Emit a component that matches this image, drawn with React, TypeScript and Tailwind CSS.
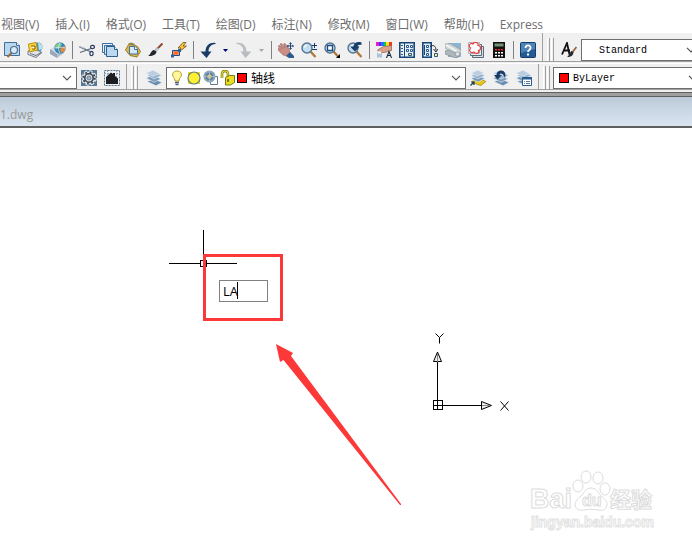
import type { ReactNode } from 'react';

const menus = [
  '视图(V)',
  '插入(I)',
  '格式(O)',
  '工具(T)',
  '绘图(D)',
  '标注(N)',
  '修改(M)',
  '窗口(W)',
  '帮助(H)',
  'Express',
];

function Icon({ children }: { children: ReactNode }) {
  return (
    <svg width="16" height="16" viewBox="0 0 16 16" fill="none" aria-hidden="true" className="shrink-0">
      {children}
    </svg>
  );
}

function Magnifier() {
  return (
    <>
      <path d="M9.5 9.5l5 5.500" stroke="#b07a3a" strokeWidth="2.400" />
      <circle cx="6" cy="6" r="5" fill="#c3dcf0" stroke="#54748f" strokeWidth="1.400" />
      <path d="M3.400 5.600c.3-1.200 1.200-2 2.400-2.200" stroke="#fff" strokeWidth="1.200" />
    </>
  );
}

function LayerStack() {
  return (
    <>
      <path d="M1 11.500l7.500-2.500 7.500 3.500-6 3.300z" fill="#6a8cb0" stroke="#e8eef5" strokeWidth=".6" />
      <path d="M0 8l7.500-3 7.500 4-7 3.300z" fill="#7d9cbc" stroke="#e8eef5" strokeWidth=".6" />
      <path d="M1 5l7.500-3 7 3.500-7.500 3.500z" fill="#98b2cc" stroke="#e8eef5" strokeWidth=".6" />
      <path d="M0 3l7-2.800 6.500 3.300-6.500 2.800z" fill="#bacde0" stroke="#e8eef5" strokeWidth=".6" />
    </>
  );
}

const icons: Record<string, ReactNode> = {
  preview: (
    <>
      <path d="M.5.5h12l3 3v10h-15z" fill="#b9d6ef" stroke="#3f6f9f" />
      <path d="M12.500.5v3h3" fill="#fff" stroke="#3f6f9f" />
      <path d="M8 10.500l-4.500 4.500" stroke="#9a6a35" strokeWidth="2" />
      <circle cx="10" cy="8" r="3.500" fill="#d7eafa" stroke="#4f6f8c" strokeWidth="1.200" />
    </>
  ),
  plot: (
    <>
      <circle cx="11" cy="5" r="4.500" fill="#3e93c9" />
      <path d="M11 .5c3 1 5 3 4.500 6l-3.500 2z" fill="#bfe0ee" />
      <path d="M1 9l7-2 7 3.500-6 5-8-3z" fill="#dfe4ea" stroke="#566372" strokeWidth=".8" />
      <path d="M1.500 2l7.500-1.500 1.500 7.500-8 2z" fill="#ffd53d" stroke="#b8900c" />
      <path d="M4 4h4v3h-3" fill="#fff6c8" stroke="#7a5c00" />
      <path d="M3 11.500l6 2 5-3" stroke="#4b5865" strokeWidth=".8" />
    </>
  ),
  publish: (
    <>
      <path d="M0 7l7-3 8 5-7 5.500z" fill="#d3dae3" />
      <path d="M0 7l7 5v4l-7-4z" fill="#97a6b8" />
      <path d="M7 12l7-4v3l-7 5z" fill="#b3bfcc" />
      <circle cx="10" cy="6" r="5.700" fill="#3684bf" />
      <path d="M5 4c2-4 6-3.500 7-2l-2 4-4 1z" fill="#7fc98b" />
      <path d="M10 7l4.500-3.500c1.500 2 1 4.500-.5 6.500l-3 .5z" fill="#e08b3c" />
      <path d="M4.500 6c3-1 7-1 11 0M10 .5c-2 4-2 7 0 11" stroke="#dcecf7" strokeWidth=".7" />
    </>
  ),
  cut: (
    <>
      <path d="M0 4.500l11 5M1 10.500l11-4" stroke="#5b6a7b" strokeWidth="1.300" />
      <path d="M0 4.500l7 2.300" stroke="#a8b4c0" />
      <ellipse cx="13.500" cy="5" rx="2" ry="1.600" stroke="#2d3e66" strokeWidth="1.200" />
      <ellipse cx="12.500" cy="11.500" rx="1.600" ry="2.200" stroke="#2d3e66" strokeWidth="1.200" />
    </>
  ),
  copy: (
    <>
      <path d="M.5 1.500h10v9h-10z" fill="#eaf3fb" stroke="#3d6f9f" />
      <path d="M2.500 3.500h10v9h-10z" fill="#d4e6f5" stroke="#3d6f9f" />
      <path d="M4.500 4.500h8l3 3v7h-11z" fill="#bcd8ef" stroke="#2f618f" />
      <path d="M12.500 4.500v3h3" fill="#fff" stroke="#2f618f" />
    </>
  ),
  paste: (
    <>
      <path d="M4.500 1l8 3.500 3 5-3.500 5.500-7-1.500-4.500-5.500z" fill="#d9b648" stroke="#9a7c2a" />
      <path d="M4.500 4.500h5.500l2.500 2.500v5h-8z" fill="#d6e8f7" stroke="#44719a" />
      <path d="M9.500 4.500v3h3" fill="#fff" stroke="#44719a" />
      <path d="M4 3l2-2.500 4 1.500-1 1.500z" fill="#8d8250" />
    </>
  ),
  brush: (
    <>
      <path d="M14.500 1.500l-5 5" stroke="#8a4a2d" strokeWidth="2" />
      <path d="M10 6l-2.500 2.500" stroke="#b6bfc8" strokeWidth="3" />
      <path d="M8.500 9.500c0 3-4 5-8.500 4.500 2.500-1 3-5.500 6-6z" fill="#22262c" />
    </>
  ),
  blockEdit: (
    <>
      <path d="M12 .5l-5 5.500h3l-2 4 7.500-6h-3.500l3-3.500z" fill="#ffc52e" stroke="#6d5220" strokeWidth=".8" />
      <path d="M1.500 8.500h7v5h-7z" fill="#f39a66" stroke="#1f4f86" />
      <path d="M0 12.500h3v3h-3zM7 7h3v3h-3z" fill="#2d62a0" />
      <path d="M3 9.500h4v3h-4z" fill="#ff6a2c" />
    </>
  ),
  undo: (
    <path d="M15.500 1c-5-1-10 2-10 8.500h-5l6 6.500 5-6.500h-3c0-4 2-7 7-7.500z" fill="#193b68" />
  ),
  redo: <path d="M.5 1c5-1 10 2 10 8.500h5l-6 6.500-5-6.500h3c0-4-2-7-7-7.500z" fill="#b9bcc0" />,
  pan: (
    <>
      <path d="M0 4l1.500-.5 3 3-2.500-4.500 1.500-.5 3.500 4.500-1.500-4 1.500-.5 4 5.500 1 4-3 3-4-1-4-4-1.500-2 1.500-.5 1.500 1z" fill="#c98f87" stroke="#9a625d" strokeWidth=".6" />
      <path d="M8 14l4-4 4 4v2h-5z" fill="#2c5b8f" />
      <path d="M12.500 1v6M9.500 4h6" stroke="#294a78" />
      <path d="M11 2l1.500-2 1.500 2zM11 6l1.500 2 1.500-2zM10.500 2.500l-2 1.500 2 1.500zM14.500 2.500l1.500 1.500-1.500 1.500z" fill="#294a78" />
    </>
  ),
  zoomRealtime: (
    <>
      <Magnifier />
      <path d="M13.500 1v5M11 3.500h5M11 7.500h5" stroke="#183d6c" />
    </>
  ),
  zoomWindow: (
    <>
      <Magnifier />
      <path d="M3.500 3.500h5v5h-5z" fill="#fff" stroke="#1c4a7c" strokeWidth="1.300" />
      <path d="M16 12v4h-4z" fill="#000" />
    </>
  ),
  zoomPrevious: (
    <>
      <Magnifier />
      <path d="M14.500.5c-5-1.500-7.500 1-8 4h-3.500l5 5 4.500-5h-2.500c0-1 2-2 4.500-1.500z" fill="#173d68" />
    </>
  ),
  properties: (
    <>
      <path d="M0 0h3v4h-3z" fill="#e11dd2" />
      <path d="M3 0h2v4h-2z" fill="#6a21e8" />
      <path d="M5 0h3v4h-3z" fill="#1477ff" />
      <path d="M8 0h2v4h-2z" fill="#14c44a" />
      <path d="M10 0h3v4h-3z" fill="#f5e71c" />
      <path d="M13 0h3v4h-3z" fill="#f3342b" />
      <path d="M1.500 8l6-3.500 8-1v5l-4 1-3 1-5 0z" fill="#dba18c" stroke="#8a5a4b" strokeWidth=".7" />
      <path d="M1 10.500h5v5h-5z" fill="#a9c4db" />
      <path d="M2 9.500h3v2h-3z" fill="#fff" />
      <path d="M10.500 16l2.500-6.500 2.500 6.500M11.500 13.500h3" stroke="#1b2b3d" strokeWidth="1.100" />
    </>
  ),
  designCenter: (
    <>
      <path d="M.8.8h14.400v14.400h-14.400z" fill="#e6f1fa" stroke="#174679" strokeWidth="1.600" />
      <path d="M5.500 1v14" stroke="#174679" />
      <path d="M2 3.500h2M2 6.500h2M2 9.500h2M2 12.500h2" stroke="#355f8b" />
      <path d="M7.500 3.500h2v2h-2zM11.500 3.500h2v2h-2zM7.500 7.500h2v2h-2zM11.500 7.500h2v2h-2z" fill="#fff" stroke="#26578a" />
      <path d="M9.500 11.500h3v2h-3z" fill="#ffef62" stroke="#26578a" />
    </>
  ),
  toolPalettes: (
    <>
      <path d="M.8.8h8.400v14.400h-8.400z" fill="#dcecf8" stroke="#174679" strokeWidth="1.600" />
      <path d="M2.500 3v10" stroke="#174679" />
      <path d="M4.500 3.500h2v2h-2zM4.500 7.500h2v2h-2zM4.500 11.500h2v2h-2z" fill="#fff" stroke="#26578a" />
      <path d="M8 4.500c3-2 6-1 6 4M11.500 7l2.500 3 2-3" stroke="#202b38" />
      <path d="M12.500 11.500h3v3h-3z" fill="#ffef62" stroke="#26578a" />
    </>
  ),
  sheetSet: (
    <>
      <path d="M3 1h13v14h-13z" fill="#8fb2cf" />
      <path d="M0 2l5-.5 11 6.500v4l-5 1-11-7z" fill="#cfd6d6" stroke="#8a979d" strokeWidth=".6" />
      <path d="M1 3l13 7.500" stroke="#f4f6f6" strokeWidth="1.500" />
      <path d="M0 9l4-1 10 5-1 2.500h-4l-9-3.500z" fill="#aeb8ba" stroke="#75858e" strokeWidth=".6" />
      <ellipse cx="12.500" cy="12" rx="2.500" ry="2.200" fill="#dfe4e4" stroke="#75858e" strokeWidth=".7" />
    </>
  ),
  markup: (
    <>
      <path d="M4.500 4.500h11v11h-11z" fill="#d7dee5" stroke="#5a6a7a" />
      <path d="M2.500 2.500h11v11h-11z" fill="#e6ebf0" stroke="#5a6a7a" />
      <path d="M.5.5h11v11h-11z" fill="#f5f7f9" stroke="#a9b5c0" />
      <path d="M2.500 6c-3-2 0-6 2.500-4 2-3 6-1 5 1.500 3.500 0 3 5 .5 5 1 3-3 4-4.500 1.500-3 2-5.500-1-3.500-4z" fill="#fff" stroke="#ef3b3b" strokeWidth="1.200" />
    </>
  ),
  calculator: (
    <>
      <path d="M2 0h12v16h-12z" fill="#111" />
      <path d="M3.500 1.500h9v3h-9z" fill="#739273" />
      <path d="M4 7h2v1.500h-2zM7 7h2v1.500h-2zM10 7h2v1.500h-2z" fill="#ef2b2b" />
      <path d="M4 10h2v1.500h-2zM7 10h2v1.500h-2zM10 10h2v1.500h-2zM4 13h2v1.500h-2zM7 13h2v1.500h-2zM10 13h2v1.500h-2z" fill="#fff" />
    </>
  ),
  help: (
    <>
      <rect x=".5" y=".5" width="15" height="15" rx="1" fill="#225b95" stroke="#153e69" />
      <path d="M1 1h14v6l-14 4z" fill="#4d83b7" />
      <path d="M5.500 6c0-3.500 5.500-3.500 5 0 0 2-2.500 2-2.500 4" stroke="#fff" strokeWidth="1.800" />
      <path d="M7 11.500h2v2h-2z" fill="#fff" />
    </>
  ),
  textStyle: (
    <>
      <path d="M1 12.500l5-11.500 2.500 11.500M3 8.500h6" stroke="#111" strokeWidth="1.800" />
      <path d="M15.500 5l-4 5" stroke="#9b6237" strokeWidth="1.800" />
      <path d="M12.500 10c0 3-2 5-6.500 5 2-1 2-4 4.500-6z" fill="#252a30" />
    </>
  ),
  workspaceSettings: (
    <>
      <path d="M0 0h16v16h-16z" fill="#557796" />
      <circle cx="8" cy="8" r="6.600" fill="#dce5ed" stroke="#dce5ed" strokeWidth="2.400" strokeDasharray="3.200 1.980" />
      <circle cx="8" cy="8" r="5.800" stroke="#3a4148" strokeWidth="1.800" strokeDasharray="1.800 2.755" />
      <circle cx="8" cy="8" r="4.200" stroke="#3a4148" strokeWidth="1.600" />
      <circle cx="8" cy="8" r="2" fill="#9fb4c6" stroke="#5b7186" strokeWidth=".8" />
    </>
  ),
  myWorkspace: (
    <>
      <path d="M.5.5h15v15h-15z" stroke="#56738e" strokeDasharray="2 1" />
      <path d="M0 3.500h16M12.500 0v16M3.500 0v16" stroke="#8da4b8" strokeDasharray="2 1" />
      <path d="M2 7l5-4.500 2 1.500v-1h2v3l3 2.500v5.500h-12z" fill="#1c1e21" />
    </>
  ),
  layers: <LayerStack />,
  makeLayerCurrent: (
    <>
      <path d="M2 11.500l7-3 7 3-5 4-4-1z" fill="#e5c51d" stroke="#927b0b" strokeWidth=".6" />
      <path d="M1 8.500l7-3 7 3-7 3.500z" fill="#7897b8" stroke="#e8eef5" strokeWidth=".6" />
      <path d="M1 5.500l7-3 7 3-7 3.500z" fill="#98b2cc" stroke="#e8eef5" strokeWidth=".6" />
      <path d="M1 3l7-2.800 6 2.800-7 3z" fill="#bacde0" stroke="#e8eef5" strokeWidth=".6" />
      <path d="M.5 15.500l3-3M1 12h3v3" stroke="#16375f" strokeWidth="1.200" />
    </>
  ),
  layerPrevious: (
    <>
      <LayerStack />
      <path d="M12 8c1.500-5-1-8-4.500-7.500-3 .5-4 2.500-4 4.500h-2.500l3.500 4.500 4.500-4.500h-2.500c0-2 3.500-3 5.500 3z" fill="#183c68" />
    </>
  ),
  layerStates: (
    <>
      <LayerStack />
      <path d="M6.500 7.500h9v8h-9z" fill="#fff" stroke="#285d91" />
      <path d="M6 7h10v2.500h-10z" fill="#285d91" />
      <path d="M8 11.500h1M10 11.500h4M8 13.500h1M10 13.500h4" stroke="#5a7896" />
    </>
  ),
  bulb: (
    <>
      <path d="M8 1c-5 0-5.500 5-2.500 7.500l.5 2.500h4l.5-2.500c3-2.500 2.500-7.500-2.500-7.500z" fill="#fff799" stroke="#b0a12a" />
      <path d="M6 12.500h4M6.500 14.500h3" stroke="#55616d" strokeWidth="1.300" />
    </>
  ),
  sun: (
    <>
      <path d="M2 2h3v3h-3zM11 2h3v3h-3zM2 11h3v3h-3zM11 11h3v3h-3z" fill="#edda24" />
      <circle cx="8" cy="8" r="6" fill="#ffef32" stroke="#5d7f86" strokeWidth="1.200" />
    </>
  ),
  viewportFreeze: (
    <>
      <path d="M7.500 6.500h7v8h-7z" fill="#fff" stroke="#5e7e9c" />
      <circle cx="6.500" cy="6.500" r="6" fill="#86a3b9" />
      <circle cx="6.500" cy="6.500" r="3" fill="#d5c675" stroke="#58799a" strokeWidth="1.300" />
      <path d="M6.500 1v11M1 6.500h11" stroke="#b7c9d7" strokeWidth=".7" />
    </>
  ),
  unlock: (
    <>
      <path d="M2 8v-4c0-4 6-4 6 0v3" stroke="#7d780b" strokeWidth="2.600" />
      <path d="M2 8v-4c0-4 6-4 6 0v3" stroke="#e2db3a" strokeWidth="1.200" />
      <path d="M5.500 7.500l4-2h5v7l-4 2.500h-5z" fill="#e8de25" stroke="#7d780b" />
      <path d="M8 9v3" stroke="#595600" strokeWidth="1.500" />
    </>
  ),
};

function ToolButton({ name, label }: { name: string; label: string }) {
  return (
    <button type="button" aria-label={label} title={label} className="flex h-[22px] w-[23px] shrink-0 items-center justify-center">
      <Icon>{icons[name]}</Icon>
    </button>
  );
}

function CaretButton({ label, className }: { label: string; className: string }) {
  return (
    <button type="button" aria-label={label} className={`flex h-[22px] w-[13px] shrink-0 items-center justify-center ${className}`}>
      <svg width="5" height="3" viewBox="0 0 5 3" fill="currentColor" aria-hidden="true">
        <path d="M0 0h5L2.500 3z" />
      </svg>
    </button>
  );
}

function Separator() {
  return (
    <div className="flex h-[18px] w-[6px] shrink-0 justify-center">
      <div className="w-px bg-[#808080]" />
    </div>
  );
}

function Grip() {
  return (
    <div className="flex h-6 shrink-0 gap-px" aria-hidden="true">
      <div className="w-[3px] border-r border-l border-r-[#a0a0a0] border-l-white" />
      <div className="w-[3px] border-r border-l border-r-[#a0a0a0] border-l-white" />
    </div>
  );
}

function Chevron() {
  return (
    <svg width="10" height="6" viewBox="0 0 10 6" fill="none" stroke="#555" aria-hidden="true" className="shrink-0">
      <path d="M1 .8l4 4 4-4" strokeWidth="1.200" />
    </svg>
  );
}

type ComboProps = {
  label: string;
  value: string;
  className: string;
  selectClassName?: string;
  children?: ReactNode;
};

function Combo({ label, value, className, selectClassName = '', children }: ComboProps) {
  return (
    <div className={`flex h-[22px] shrink-0 items-center border border-[#6e6e6e] bg-white pr-1 text-black ${className}`}>
      {children}
      <select aria-label={label} className={`h-5 min-w-0 flex-1 appearance-none bg-transparent outline-none ${selectClassName}`}>
        <option>{value}</option>
      </select>
      <Chevron />
    </div>
  );
}

function Swatch() {
  return <span className="h-[10px] w-[10px] shrink-0 border border-black bg-[#ff0000]" />;
}

function StandardBar() {
  return (
    <div className="flex h-[29px] items-center overflow-hidden border-b border-[#a0a0a0]">
      <div className="flex h-full shrink-0 items-center border-r border-[#a0a0a0] pt-[6px] pr-[3px]">
        <ToolButton name="preview" label="打印预览" />
        <ToolButton name="plot" label="打印" />
        <ToolButton name="publish" label="发布" />
        <Separator />
        <ToolButton name="cut" label="剪切" />
        <ToolButton name="copy" label="复制" />
        <ToolButton name="paste" label="粘贴" />
        <ToolButton name="brush" label="特性匹配" />
        <ToolButton name="blockEdit" label="块编辑器" />
        <Separator />
        <ToolButton name="undo" label="放弃" />
        <CaretButton label="放弃列表" className="text-[#00007f]" />
        <ToolButton name="redo" label="重做" />
        <CaretButton label="重做列表" className="text-[#a8a8b0]" />
        <Separator />
        <ToolButton name="pan" label="实时平移" />
        <ToolButton name="zoomRealtime" label="实时缩放" />
        <ToolButton name="zoomWindow" label="窗口缩放" />
        <ToolButton name="zoomPrevious" label="缩放上一个" />
        <Separator />
        <ToolButton name="properties" label="特性" />
        <ToolButton name="designCenter" label="设计中心" />
        <ToolButton name="toolPalettes" label="工具选项板" />
        <ToolButton name="sheetSet" label="图纸集管理器" />
        <ToolButton name="markup" label="标记集管理器" />
        <ToolButton name="calculator" label="快速计算器" />
        <Separator />
        <ToolButton name="help" label="帮助" />
      </div>
      <div className="flex h-full shrink-0 items-center pt-[6px] pl-1">
        <Grip />
        <div className="pr-px pl-[3px]">
          <ToolButton name="textStyle" label="文字样式" />
        </div>
        <Combo
          label="文字样式控制"
          value="Standard"
          className="w-[120px]"
          selectClassName="pl-[17px] font-['Liberation_Mono',monospace] text-[10px]"
        />
      </div>
    </div>
  );
}

function LayerBar() {
  return (
    <div className="flex h-[27px] items-center overflow-hidden border-t border-b border-t-white border-b-[#a0a0a0]">
      <div className="flex h-full shrink-0 items-center border-r border-[#a0a0a0] pt-[3px] pr-[3px]">
        <Combo label="工作空间" value="" className="w-[77px] border-l-0" />
        <ToolButton name="workspaceSettings" label="工作空间设置" />
        <ToolButton name="myWorkspace" label="我的工作空间" />
      </div>
      <div className="flex h-full shrink-0 items-center border-r border-[#a0a0a0] pt-[3px] pr-[3px] pl-1">
        <Grip />
        <div className="pr-px pl-1">
          <ToolButton name="layers" label="图层特性管理器" />
        </div>
        <Combo
          label="图层控制"
          value="轴线"
          className="w-[300px]"
          selectClassName="pl-1 font-['Noto_Sans_CJK_SC',sans-serif] text-xs"
        >
          <div className="flex items-center gap-px pl-[2px]">
            <Icon>{icons.bulb}</Icon>
            <Icon>{icons.sun}</Icon>
            <Icon>{icons.viewportFreeze}</Icon>
            <Icon>{icons.unlock}</Icon>
            <Swatch />
          </div>
        </Combo>
        <ToolButton name="makeLayerCurrent" label="将对象的图层置为当前" />
        <ToolButton name="layerPrevious" label="上一个图层" />
        <ToolButton name="layerStates" label="图层状态管理器" />
      </div>
      <div className="flex h-full shrink-0 items-center pt-[3px] pl-1">
        <Grip />
        <div className="pl-[3px]">
          <Combo
            label="颜色控制"
            value="ByLayer"
            className="w-[150px]"
            selectClassName="pl-1 font-['Liberation_Mono',monospace] text-[10px]"
          >
            <div className="flex pl-[5px]">
              <Swatch />
            </div>
          </Combo>
        </div>
      </div>
    </div>
  );
}

function UcsIcon() {
  return (
    <svg width="84" height="84" viewBox="0 0 84 84" fill="none" stroke="#000" className="absolute top-[200px] left-[430px]" role="img" aria-label="UCS">
      <path d="M7.500 34v48M3.500 77.500h48" shapeRendering="crispEdges" />
      <path d="M3.500 72.500h9v9h-9z" shapeRendering="crispEdges" />
      <path d="M7.500 24l4 9.500h-8z" fill="#eee" />
      <path d="M7.500 26v8" stroke="#888" />
      <path d="M61.500 77.500l-10-4v8z" fill="#eee" />
      <path d="M52 77.500h8" stroke="#888" />
      <path d="M5.500 5.500l4 4 4-4M9.500 9.500v6" />
      <path d="M70.500 73.500l8 9M78.500 73.500l-8 9" />
    </svg>
  );
}

function Watermark() {
  return (
    <svg
      width="136"
      height="66"
      viewBox="0 0 136 66"
      fill="#fff"
      stroke="#dcdcdc"
      className="absolute right-[30px] bottom-[10px] font-['Liberation_Sans','Noto_Sans_CJK_SC',sans-serif] font-bold"
    >
      <text x="4" y="38" fontSize="27">Bai</text>
      <ellipse cx="52" cy="16" rx="5" ry="6" />
      <ellipse cx="60" cy="7" rx="5" ry="6" />
      <ellipse cx="72" cy="8" rx="5" ry="6" />
      <ellipse cx="79" cy="19" rx="5" ry="6" />
      <path d="M65 18c5 0 7 4 10 8 3 3 7 5 6 9-1 5-5 6-9 5-5-1-9-1-14 0-4 1-9-1-9-5s3-6 6-9c4-4 5-8 10-8z" />
      <text x="56" y="36" fontSize="16">du</text>
      <text x="84" y="37" fontSize="21">经验</text>
      <text x="5" y="57" fontSize="14" stroke="#e2e2e2">jingyan.baidu.com</text>
    </svg>
  );
}

export default function App() {
  return (
    <div className="flex min-h-screen flex-col overflow-hidden bg-white font-['Open_Sans','Noto_Sans_CJK_SC',sans-serif]">
      <nav className="flex h-[33px] gap-4 overflow-hidden pt-4 pl-px text-xs leading-4 text-[#6d6d6d]">
        {menus.map((menu) => (
          <button key={menu} type="button" className="shrink-0 whitespace-nowrap">
            {menu}
          </button>
        ))}
      </nav>

      <header className="bg-[#f0f0f0]">
        <StandardBar />
        <div className="h-px" />
        <LayerBar />
        <div className="h-[2px]" />
        <div className="h-[5px] border-t border-b border-[#606060] bg-[#a0a0a0]" />
      </header>

      <div className="h-[31px] overflow-hidden border-b-2 border-[#606060] bg-linear-to-b from-[#bccad9] to-[#dae5f1] pt-2">
        <h1 className="text-xs leading-5 text-[#999]">1.dwg</h1>
      </div>

      <main className="relative min-h-[400px] flex-1 overflow-hidden">
        <svg width="70" height="70" viewBox="0 0 70 70" fill="none" stroke="#000" shapeRendering="crispEdges" className="absolute top-[102px] left-[169px]" aria-hidden="true">
          <path d="M34.500 0v31M0 33.500h31M38 33.500h30" />
          <path d="M31.500 30.500h6v6h-6z" />
        </svg>
        <div className="absolute top-[126px] left-[203px] border-3 border-[#fc3838] pt-[23px] pr-3 pb-4 pl-[13px]">
          <input
            aria-label="命令"
            defaultValue="LA"
            className="block h-[22px] w-[49px] border border-[#808080] bg-white px-[3px] text-[13px] text-black outline-none"
          />
        </div>
        <div className="absolute top-[154px] left-[237px] h-[17px] w-px bg-black" />
        <svg width="130" height="166" viewBox="0 0 130 166" fill="#fc3838" className="absolute top-[214px] left-[274px]" aria-hidden="true">
          <path d="M2 2l17 9-2 3L127 162v1h-1L9.500 18 6 20z" />
        </svg>
        <UcsIcon />
        <Watermark />
      </main>
    </div>
  );
}
